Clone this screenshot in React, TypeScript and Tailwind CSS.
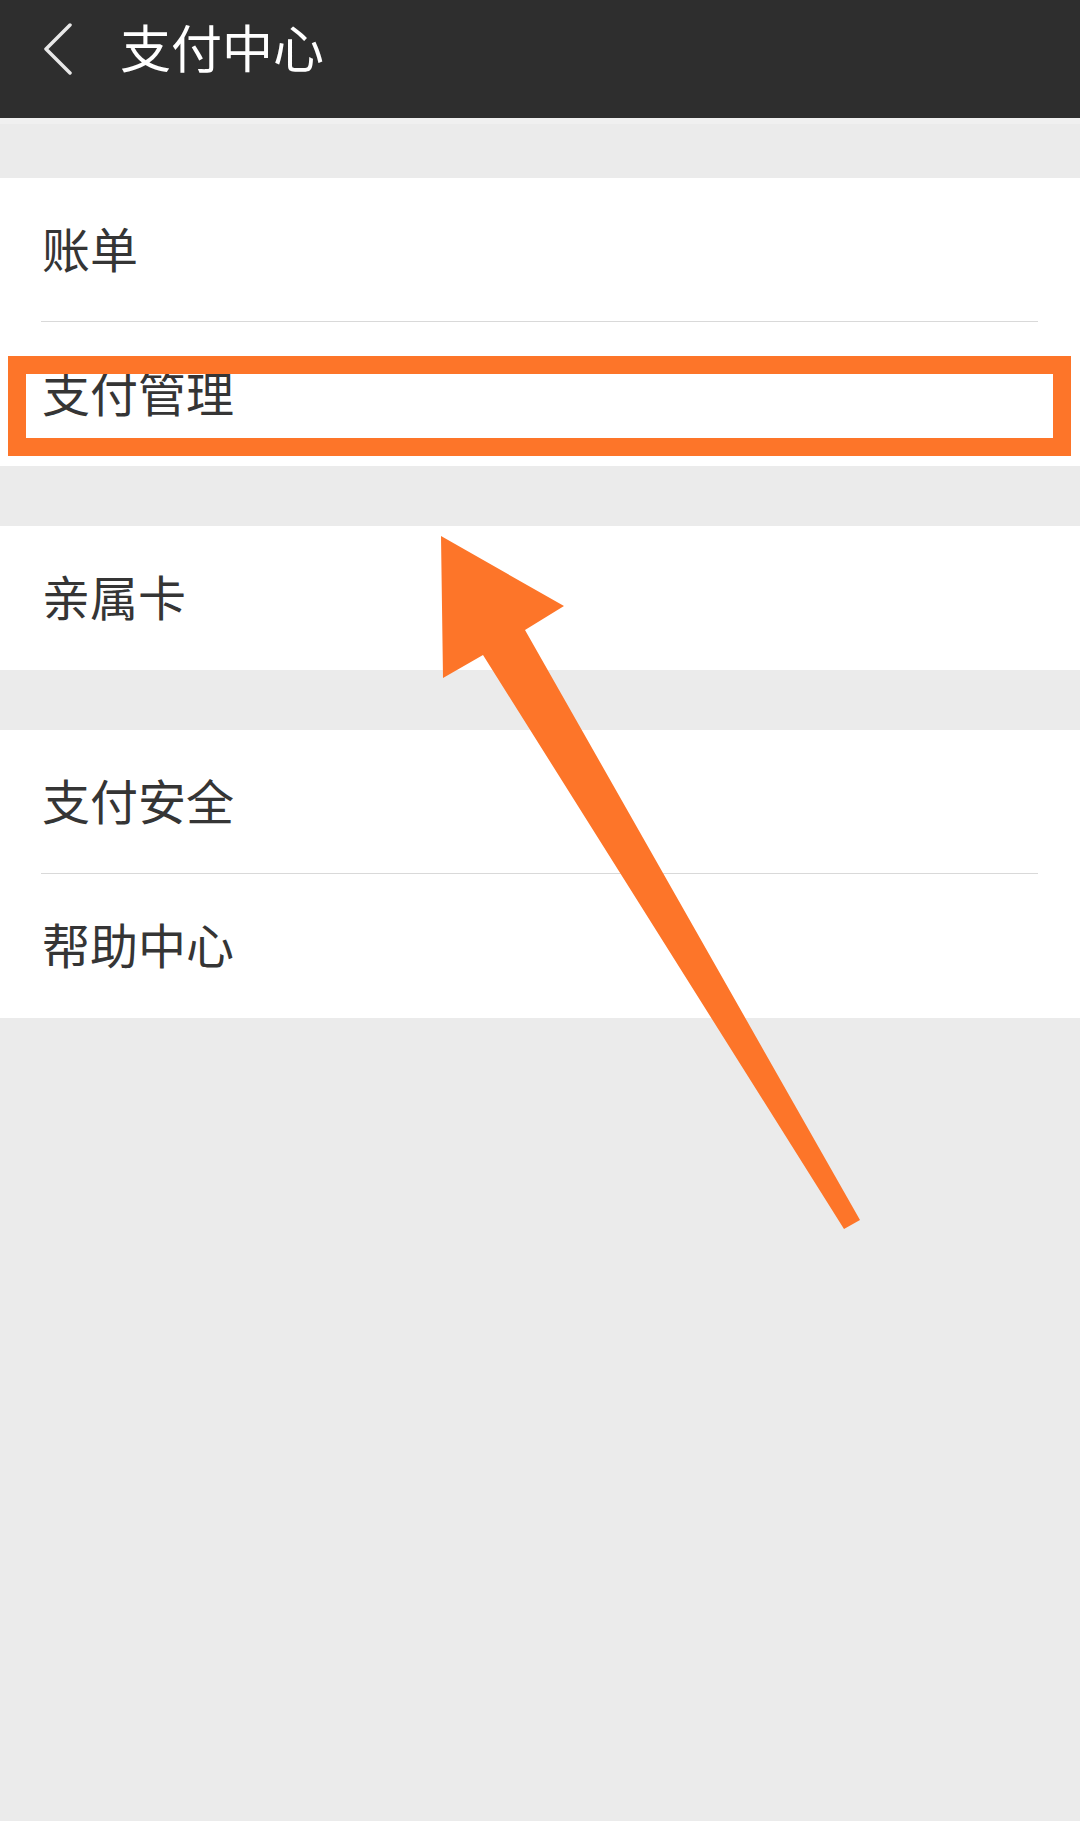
import React from 'react';

const font = { fontFamily: '"Noto Sans CJK SC", "Noto Sans", sans-serif' };

function Row({ label, last = false }: { label: string; last?: boolean }) {
  return (
    <div className="bg-white">
      <div className={`flex items-center pb-[6px] pl-[42px] ${last ? 'h-[144px]' : 'h-[143px]'}`}>
        <span className="text-[48px] leading-none text-[#353535]">{label}</span>
      </div>
    </div>
  );
}

function Divider() {
  return (
    <div className="bg-white pl-[41px] pr-[42px]">
      <div className="h-px bg-[#d9d9d9]" />
    </div>
  );
}

export default function App() {
  return (
    <div className="relative min-h-[1821px] w-[1080px] bg-[#ebebeb]" style={font}>
      {/* 顶部导航 */}
      <header className="h-[118px] bg-[#2e2e2e]">
        <div className="flex h-[98px] items-center">
          <div className="flex w-[120px] items-center pl-[42px]">
            <svg width="32" height="52" viewBox="0 0 32 52" fill="none">
              <path d="M28 2 L4 26 L28 50" stroke="#e8e8e8" strokeWidth="3.5" strokeLinecap="round" strokeLinejoin="round" />
            </svg>
          </div>
          <span className="pb-[6px] text-[51px] leading-none text-white">支付中心</span>
        </div>
      </header>
      <div className="h-[6px] bg-[#f0f0f0]" />

      <div className="h-[54px]" />
      <section>
        <Row label="账单" />
        <Divider />
        <Row label="支付管理" last />
      </section>

      <div className="h-[60px]" />
      <section>
        <Row label="亲属卡" last />
      </section>

      <div className="h-[60px]" />
      <section>
        <Row label="支付安全" />
        <Divider />
        <Row label="帮助中心" last />
      </section>

      {/* 标注框 */}
      <div className="pointer-events-none absolute left-[8px] top-[356px] h-[100px] w-[1063px] border-[18px] border-[#fd7529]" />

      {/* 标注箭头 */}
      <svg
        className="pointer-events-none absolute left-0 top-0"
        width="1080"
        height="1821"
        viewBox="0 0 1080 1821"
      >
        <polygon
          points="441,536 564,606 525,630 860,1220 844,1229 483,655 443,678"
          fill="#fd7529"
        />
      </svg>
    </div>
  );
}
